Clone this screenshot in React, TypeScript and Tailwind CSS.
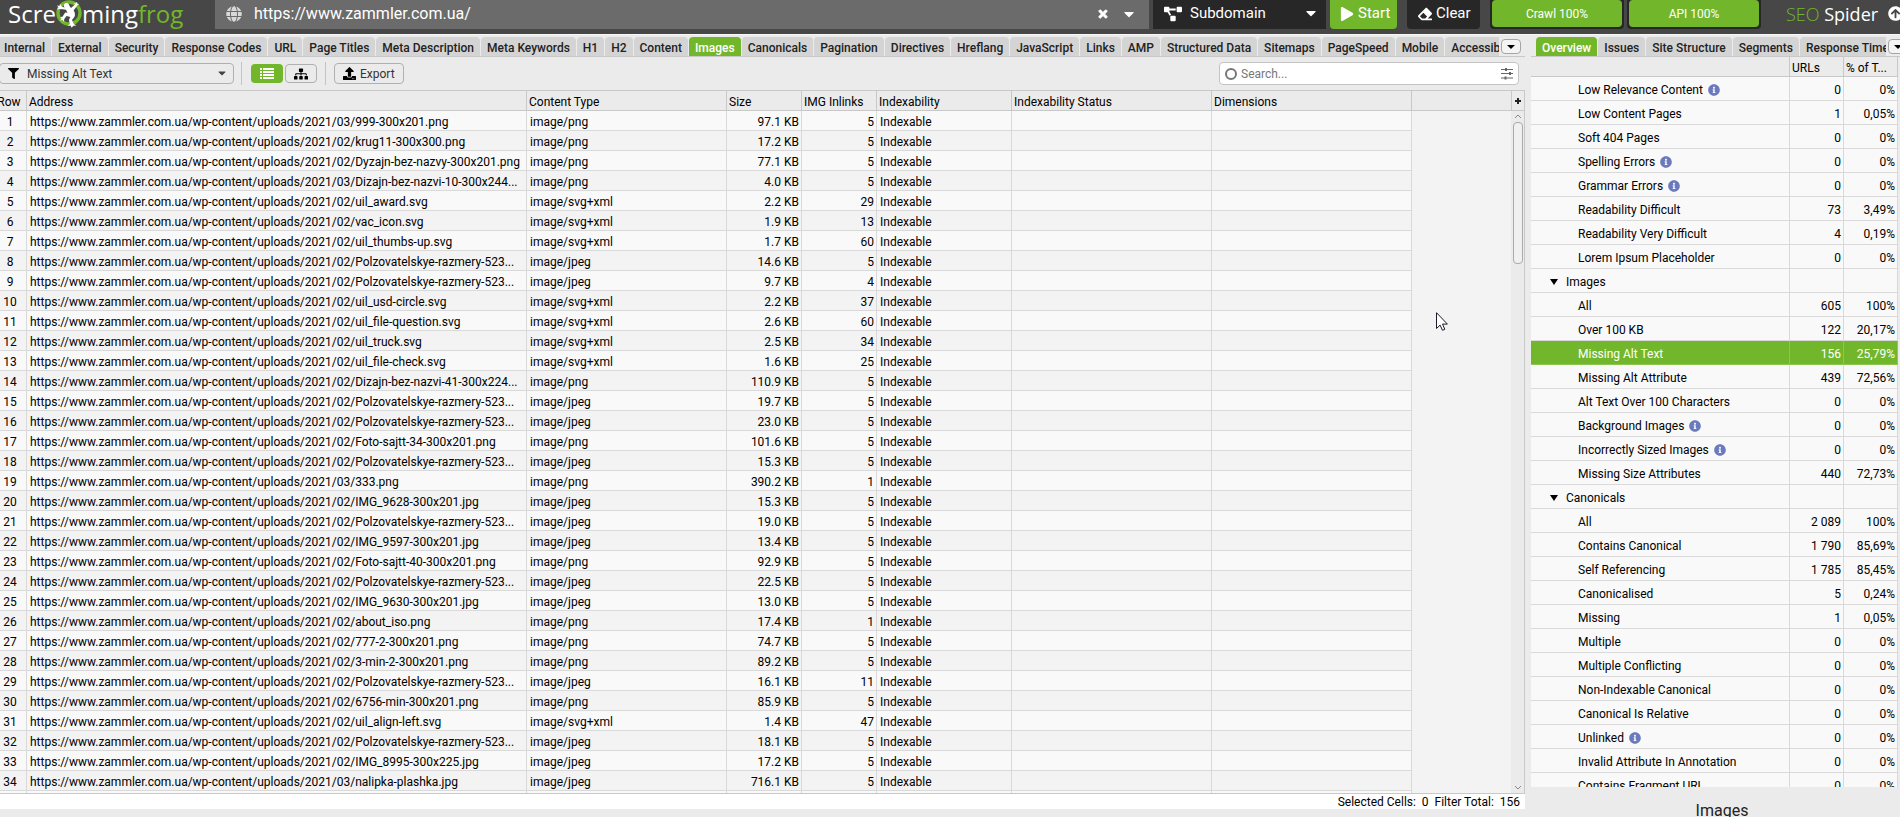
import React from 'react';
import {
  FaArrowCircleUp,
  FaCaretDown,
  FaEraser,
  FaFilter,
  FaGlobe,
  FaInfoCircle,
  FaPlay,
  FaProjectDiagram,
  FaSitemap,
  FaTimes,
  FaUpload,
} from 'react-icons/fa';

const BASE = 'https://www.zammler.com.ua/wp-content/uploads/2021/';

type ImageRow = [path: string, type: string, size: string, inlinks: number];

const imageRows: ImageRow[] = [
  ['03/999-300x201.png', 'png', '97.1', 5],
  ['02/krug11-300x300.png', 'png', '17.2', 5],
  ['02/Dyzajn-bez-nazvy-300x201.png', 'png', '77.1', 5],
  ['03/Dizajn-bez-nazvi-10-300x244...', 'png', '4.0', 5],
  ['02/uil_award.svg', 'svg+xml', '2.2', 29],
  ['02/vac_icon.svg', 'svg+xml', '1.9', 13],
  ['02/uil_thumbs-up.svg', 'svg+xml', '1.7', 60],
  ['02/Polzovatelskye-razmery-523...', 'jpeg', '14.6', 5],
  ['02/Polzovatelskye-razmery-523...', 'jpeg', '9.7', 4],
  ['02/uil_usd-circle.svg', 'svg+xml', '2.2', 37],
  ['02/uil_file-question.svg', 'svg+xml', '2.6', 60],
  ['02/uil_truck.svg', 'svg+xml', '2.5', 34],
  ['02/uil_file-check.svg', 'svg+xml', '1.6', 25],
  ['02/Dizajn-bez-nazvi-41-300x224...', 'png', '110.9', 5],
  ['02/Polzovatelskye-razmery-523...', 'jpeg', '19.7', 5],
  ['02/Polzovatelskye-razmery-523...', 'jpeg', '23.0', 5],
  ['02/Foto-sajtt-34-300x201.png', 'png', '101.6', 5],
  ['02/Polzovatelskye-razmery-523...', 'jpeg', '15.3', 5],
  ['03/333.png', 'png', '390.2', 1],
  ['02/IMG_9628-300x201.jpg', 'jpeg', '15.3', 5],
  ['02/Polzovatelskye-razmery-523...', 'jpeg', '19.0', 5],
  ['02/IMG_9597-300x201.jpg', 'jpeg', '13.4', 5],
  ['02/Foto-sajtt-40-300x201.png', 'png', '92.9', 5],
  ['02/Polzovatelskye-razmery-523...', 'jpeg', '22.5', 5],
  ['02/IMG_9630-300x201.jpg', 'jpeg', '13.0', 5],
  ['02/about_iso.png', 'png', '17.4', 1],
  ['02/777-2-300x201.png', 'png', '74.7', 5],
  ['02/3-min-2-300x201.png', 'png', '89.2', 5],
  ['02/Polzovatelskye-razmery-523...', 'jpeg', '16.1', 11],
  ['02/6756-min-300x201.png', 'png', '85.9', 5],
  ['02/uil_align-left.svg', 'svg+xml', '1.4', 47],
  ['02/Polzovatelskye-razmery-523...', 'jpeg', '18.1', 5],
  ['02/IMG_8995-300x225.jpg', 'jpeg', '17.2', 5],
  ['03/nalipka-plashka.jpg', 'jpeg', '716.1', 5],
];

interface OverviewRow {
  label: string;
  urls?: string;
  percent?: string;
  info?: boolean;
  group?: boolean;
  selected?: boolean;
}

const overviewRows: OverviewRow[] = [
  { label: 'Low Relevance Content', urls: '0', percent: '0%', info: true },
  { label: 'Low Content Pages', urls: '1', percent: '0,05%' },
  { label: 'Soft 404 Pages', urls: '0', percent: '0%' },
  { label: 'Spelling Errors', urls: '0', percent: '0%', info: true },
  { label: 'Grammar Errors', urls: '0', percent: '0%', info: true },
  { label: 'Readability Difficult', urls: '73', percent: '3,49%' },
  { label: 'Readability Very Difficult', urls: '4', percent: '0,19%' },
  { label: 'Lorem Ipsum Placeholder', urls: '0', percent: '0%' },
  { label: 'Images', group: true },
  { label: 'All', urls: '605', percent: '100%' },
  { label: 'Over 100 KB', urls: '122', percent: '20,17%' },
  { label: 'Missing Alt Text', urls: '156', percent: '25,79%', selected: true },
  { label: 'Missing Alt Attribute', urls: '439', percent: '72,56%' },
  { label: 'Alt Text Over 100 Characters', urls: '0', percent: '0%' },
  { label: 'Background Images', urls: '0', percent: '0%', info: true },
  { label: 'Incorrectly Sized Images', urls: '0', percent: '0%', info: true },
  { label: 'Missing Size Attributes', urls: '440', percent: '72,73%' },
  { label: 'Canonicals', group: true },
  { label: 'All', urls: '2 089', percent: '100%' },
  { label: 'Contains Canonical', urls: '1 790', percent: '85,69%' },
  { label: 'Self Referencing', urls: '1 785', percent: '85,45%' },
  { label: 'Canonicalised', urls: '5', percent: '0,24%' },
  { label: 'Missing', urls: '1', percent: '0,05%' },
  { label: 'Multiple', urls: '0', percent: '0%' },
  { label: 'Multiple Conflicting', urls: '0', percent: '0%' },
  { label: 'Non-Indexable Canonical', urls: '0', percent: '0%' },
  { label: 'Canonical Is Relative', urls: '0', percent: '0%' },
  { label: 'Unlinked', urls: '0', percent: '0%', info: true },
  { label: 'Invalid Attribute In Annotation', urls: '0', percent: '0%' },
  { label: 'Contains Fragment URL', urls: '0', percent: '0%' },
];

const mainTabs = [
  'Internal', 'External', 'Security', 'Response Codes', 'URL', 'Page Titles',
  'Meta Description', 'Meta Keywords', 'H1', 'H2', 'Content', 'Images',
  'Canonicals', 'Pagination', 'Directives', 'Hreflang', 'JavaScript', 'Links',
  'AMP', 'Structured Data', 'Sitemaps', 'PageSpeed', 'Mobile', 'Accessibility',
];

const sideTabs = ['Overview', 'Issues', 'Site Structure', 'Segments', 'Response Times'];

const Logo = () => (
  <div className="flex h-[27px] w-[215px] shrink-0 items-center pl-2 font-['Open_Sans'] text-2xl leading-8 text-white">
    <span>Scre</span>
    <svg viewBox="0 0 26 28" className="h-7 w-[26px] shrink-0">
      <circle cx="13" cy="13" r="11" fill="none" stroke="#72b72b" strokeWidth="3.4" />
      <path
        d="M9 3.5c2-1 4 0 4.500 2.500l1.500 2 4-3.500-1-2 1.700 1 1.300-1.800.3 2 2 .2-1.700 1.200-4 5.400c1.500 2 1.800 4.500.8 6.500l-2.400 3 1.800 4 2.700 1.500-3 .2-2 2-.8-2.200-3.200.6 2.400-2.200-1-3.800 1.400-3-3.800-1-2.300 3.200-.2 2.600-1.500-2-2.500.6 1.500-2-1.500-1.500 2.500-.2 2.700-4.200 2.300.2-1.500-3-3.200-.6L3.500 9l-2.500.5L2.500 7.500 1 5.500l2.600.6L5 4l.5 2.600 3 .8C7.500 6 7.500 4.400 9 3.500z"
        fill="#fff"
      />
    </svg>
    <span>ming</span>
    <span className="text-[#72b72b]">frog</span>
  </div>
);

const ListIcon = () => (
  <svg viewBox="0 0 14 11" className="h-[11px] w-[14px]" fill="currentColor">
    {[0, 3, 6, 9].map((y) => (
      <g key={y}>
        <rect x="0" y={y} width="2" height="2" />
        <rect x="3" y={y} width="11" height="2" />
      </g>
    ))}
  </svg>
);

const SlidersIcon = () => (
  <svg viewBox="0 0 12 12" className="h-3 w-3" stroke="#666" fill="#666">
    <path d="M0 1.500h12M0 5.500h12M0 10h12" strokeWidth="1" />
    <path d="M4 0h2v3H4zM8 4h2v3H8zM3.500 8.500h2v3h-2z" stroke="none" />
  </svg>
);

interface TabStripProps {
  tabs: string[];
  active: string;
  className?: string;
}

const TabStrip: React.FC<TabStripProps> = ({ tabs, active, className = '' }) => (
  <div className={`flex h-[22px] shrink-0 items-start border-b border-[#c8c8c8] pt-0.5 ${className}`}>
    <div role="tablist" className="flex min-w-0 flex-1 gap-px overflow-hidden">
      {tabs.map((tab) => (
        <button
          key={tab}
          role="tab"
          aria-selected={tab === active}
          className={`h-[19px] shrink-0 rounded-t px-1.5 pt-0.5 text-xs leading-4 font-medium whitespace-nowrap ${
            tab === active ? 'bg-[#72b72b] text-white' : 'bg-[#d4d4d4] text-[#222]'
          }`}
        >
          {tab}
        </button>
      ))}
    </div>
    <button
      aria-label="More tabs"
      className="mt-0.5 ml-0.5 flex h-[15px] w-5 shrink-0 items-center justify-center rounded border border-[#a5a5a5] bg-[#f4f4f4] text-black"
    >
      <svg viewBox="0 0 8 4" className="h-1 w-2"><path d="M0 0h8L4 4z" /></svg>
    </button>
  </div>
);

const Header = () => (
  <header className="flex h-[34px] shrink-0 items-start overflow-hidden bg-[#474747] text-white">
    <Logo />
    <div className="flex h-[29px] min-w-0 flex-1 items-center bg-[#6b6b6b] pb-0.5 pl-[11px]">
      <FaGlobe className="size-4 shrink-0 text-[#d8d8d8]" />
      <input
        aria-label="Website URL"
        defaultValue="https://www.zammler.com.ua/"
        className="ml-3 min-w-0 flex-1 bg-transparent text-base leading-5 outline-none"
      />
      <button aria-label="Clear URL"><FaTimes className="size-3" strokeWidth="40" stroke="white" /></button>
      <button aria-label="URL history" className="mr-3 ml-3"><FaCaretDown className="size-4" /></button>
    </div>
    <div className="relative ml-1 h-[29px] w-[173px] shrink-0 bg-[#272727]">
      <FaProjectDiagram className="absolute top-[5px] left-[11px] size-[18px]" />
      <select aria-label="Crawl mode" className="h-[27px] w-full appearance-none bg-transparent pl-[37px] text-[15px] outline-none">
        <option>Subdomain</option>
      </select>
      <FaCaretDown className="pointer-events-none absolute top-[5px] right-[7px] size-4" />
    </div>
    <button className="ml-1 flex h-[29px] w-[67px] shrink-0 items-center gap-1 rounded-b bg-[#72b72b] pb-0.5 pl-2.5 text-[15px]">
      <FaPlay className="size-3.5" />
      Start
    </button>
    <button className="ml-2.5 flex h-[29px] w-[73px] shrink-0 items-center gap-1 rounded-b bg-[#272727] pb-0.5 pl-[11px] text-[15px]">
      <FaEraser className="size-3.5" />
      Clear
    </button>
    <div className="ml-2.5 flex h-[29px] w-[134px] shrink-0 rounded-b bg-[#272727] px-0.5 pb-0.5">
      <div className="flex-1 rounded bg-[#72b72b] pt-1.5 text-center text-xs leading-4">Crawl 100%</div>
    </div>
    <div className="ml-[3px] flex h-[29px] w-[134px] shrink-0 rounded-b bg-[#272727] px-0.5 pb-0.5">
      <div className="flex-1 rounded bg-[#72b72b] pt-1.5 text-center text-xs leading-4">API 100%</div>
    </div>
    <div className="ml-[25px] w-[102px] shrink-0 pt-0.5 font-['Open_Sans'] text-lg leading-6 whitespace-nowrap">
      <span className="font-light text-[#72b72b]">SEO</span> Spider
    </div>
    <div className="w-3 shrink-0 overflow-hidden pt-1.5">
      <FaArrowCircleUp className="size-[15px] max-w-none" />
    </div>
  </header>
);

const Toolbar = () => (
  <div className="flex h-[33px] shrink-0 items-center pr-1.5 text-xs">
    <div className="relative -ml-px">
      <FaFilter className="absolute top-[5px] left-[9px] size-[11px] text-black" />
      <select
        aria-label="Filter"
        className="h-[21px] w-[235px] appearance-none rounded border border-[#b0b0b0] bg-[#ebebeb] pl-[27px] text-[#333] outline-none"
      >
        <option>Missing Alt Text</option>
      </select>
      <FaCaretDown className="pointer-events-none absolute top-[4px] right-[6px] size-3 text-[#444]" />
    </div>
    <div className="ml-[7px] h-[23px] w-px bg-[#c4c4c4]" />
    <button aria-label="List view" className="ml-[9px] flex h-[19px] w-8 items-center justify-center rounded-sm bg-[#72b72b] text-white">
      <ListIcon />
    </button>
    <button aria-label="Tree view" className="ml-0.5 flex h-[19px] w-8 items-center justify-center rounded-sm border border-[#b0b0b0] text-black">
      <FaSitemap className="size-3.5" />
    </button>
    <div className="ml-2 h-[23px] w-px bg-[#c4c4c4]" />
    <button className="ml-2 flex h-[21px] w-[70px] items-center gap-1 rounded border border-[#b0b0b0] pl-2 text-[#333]">
      <FaUpload className="size-[13px] text-black" />
      Export
    </button>
    <label className="ml-auto flex h-[23px] w-[300px] items-center rounded border border-[#c4c4c4] bg-white pr-[5px] pl-[5px]">
      <span className="size-3 rounded-full border-2 border-[#777]" />
      <input aria-label="Search" placeholder="Search..." className="ml-1 min-w-0 flex-1 outline-none placeholder:text-[#777]" />
      <SlidersIcon />
    </label>
  </div>
);

const ImagesTable = () => (
  <div className="flex min-h-0 flex-1 overflow-hidden border-t border-r border-b border-[#c8c8c8] bg-[#f3f3f3]">
    <div className="min-w-0 flex-1 overflow-hidden">
      <table className="-ml-[6px] w-[calc(100%+6px)] table-fixed border-separate border-spacing-0 text-xs leading-4 text-black">
        <colgroup>
          <col className="w-[33px]" />
          <col className="w-[500px]" />
          <col className="w-[200px]" />
          <col className="w-[75px]" />
          <col className="w-[75px]" />
          <col className="w-[135px]" />
          <col className="w-[200px]" />
          <col className="w-[200px]" />
          <col />
        </colgroup>
        <thead>
          <tr className="h-5 bg-[#ebebeb] text-left *:border-b *:border-[#c8c8c8] *:p-0 *:pt-0.5 *:font-normal *:whitespace-nowrap">
            <th className="border-r"><span className="block pr-0.5 text-center">Row</span></th>
            {['Address', 'Content Type', 'Size', 'IMG Inlinks', 'Indexability', 'Indexability Status', 'Dimensions'].map((name) => (
              <th key={name} className="border-r"><span className="block pl-0.5">{name}</span></th>
            ))}
            <th />
          </tr>
        </thead>
        <tbody>
          {imageRows.map(([path, type, size, inlinks], i) => (
            <tr
              key={i}
              className="h-5 *:border-r *:border-b *:border-[#d9d9d9] *:p-0 *:pt-0.5 *:whitespace-nowrap odd:*:bg-[#f9f9f9] even:*:bg-[#f3f3f3] [&>:last-child]:border-0 [&>:last-child]:bg-[#f3f3f3]"
            >
              <td className="text-center">{i + 1}</td>
              <td><span className="block truncate pl-[3px]">{BASE + path}</span></td>
              <td><span className="block pl-[3px]">image/{type}</span></td>
              <td className="text-right"><span className="block pr-0.5">{size} KB</span></td>
              <td className="text-right"><span className="block pr-0.5">{inlinks}</span></td>
              <td><span className="block pl-[3px]">Indexable</span></td>
              <td />
              <td />
              <td />
            </tr>
          ))}
          <tr className="h-5 *:border-r *:border-[#d9d9d9] *:bg-[#f9f9f9] *:p-0 [&>:last-child]:border-0 [&>:last-child]:bg-[#f3f3f3]">
            {Array.from({ length: 9 }, (_, i) => <td key={i} />)}
          </tr>
        </tbody>
      </table>
    </div>
    <div className="flex w-[13px] shrink-0 flex-col items-center bg-[#ebebeb]">
      <button
        aria-label="Add column"
        className="flex h-5 w-full shrink-0 items-center justify-center border-b border-l border-[#c8c8c8] text-[#222]"
      >
        <svg viewBox="0 0 6 6" className="size-1.5" stroke="currentColor" strokeWidth="2"><path d="M3 0v6M0 3h6" /></svg>
      </button>
      <svg viewBox="0 0 8 4" className="mt-[3px] h-1 w-2 shrink-0" fill="none" stroke="#888"><path d="M1 4l3-3 3 3" /></svg>
      <div className="mt-1 h-[142px] w-2.5 shrink-0 rounded border border-[#aaa] bg-[#f0f0f0]" />
      <svg viewBox="0 0 8 4" className="mt-auto mb-[3px] h-1 w-2 shrink-0" fill="none" stroke="#888"><path d="M1 0l3 3 3-3" /></svg>
    </div>
  </div>
);

const OverviewPanel = () => (
  <div className="min-h-0 flex-1 overflow-hidden">
    <div className="h-full overflow-hidden pr-0.5">
      <table className="w-full table-fixed border-separate border-spacing-0 text-xs leading-4 text-black">
        <colgroup>
          <col />
          <col className="w-[54px]" />
          <col className="w-[54px]" />
        </colgroup>
        <thead>
          <tr className="h-5 text-left *:border-r *:border-b *:border-[#c8c8c8] *:p-0 *:pt-0.5 *:font-normal">
            <th />
            <th><span className="block pl-0.5">URLs</span></th>
            <th><span className="block pl-0.5">% of T...</span></th>
          </tr>
        </thead>
        <tbody>
          {overviewRows.map((row, i) => (
            <tr
              key={i}
              className={`h-6 *:border-r *:border-b *:p-0 *:pt-0.5 ${
                row.selected ? 'bg-[#72b72b] text-white *:border-[#8cc653]' : 'bg-[#f9f9f9] *:border-[#d9d9d9]'
              }`}
            >
              <td>
                {row.group ? (
                  <div className="flex items-center pl-[19px]">
                    <svg viewBox="0 0 8 6" className="h-1.5 w-2"><path d="M0 0h8L4 6z" /></svg>
                    <span className="pl-2">{row.label}</span>
                  </div>
                ) : (
                  <div className="flex items-center gap-[5px] pl-[47px]">
                    {row.label}
                    {row.info && <FaInfoCircle className="size-3 text-[#6b7abf]" />}
                  </div>
                )}
              </td>
              <td className="text-right"><span className="block pr-0.5">{row.urls}</span></td>
              <td className="text-right"><span className="block pr-0.5">{row.percent}</span></td>
            </tr>
          ))}
        </tbody>
      </table>
    </div>
  </div>
);

const App: React.FC = () => {
  return (
    <div className="flex h-screen flex-col overflow-hidden bg-[#ebebeb] font-[Roboto,sans-serif]">
      <Header />
      <div className="flex min-h-0 flex-1 gap-1.5 border-t border-[#f8f8f8]">
        <main className="relative flex min-w-0 flex-1 flex-col pb-2">
          <TabStrip tabs={mainTabs} active="Images" className="-ml-0.5 pr-1" />
          <Toolbar />
          <ImagesTable />
          <div className="h-[15px] shrink-0 bg-white pr-[5px] text-right text-xs leading-4">
            Selected Cells:&nbsp; 0&nbsp; Filter Total:&nbsp; 156
          </div>
          <svg viewBox="0 0 12 19" className="pointer-events-none absolute top-[277px] right-[77px] h-[19px] w-3">
            <path
              d="M.5.700v15.800l3.600-3.400 2.400 5.200 2.300-1-2.300-5.200h4.900z"
              fill="#fff"
              stroke="#1a1a2a"
            />
          </svg>
        </main>
        <aside className="flex w-[369px] shrink-0 flex-col overflow-hidden">
          <TabStrip tabs={sideTabs} active="Overview" className="-mr-2 pl-[5px]" />
          <OverviewPanel />
          <h2 className="h-[30px] shrink-0 pt-3.5 pl-[13px] text-center text-base leading-5 text-[#222]">Images</h2>
        </aside>
      </div>
    </div>
  );
};

export default App;
